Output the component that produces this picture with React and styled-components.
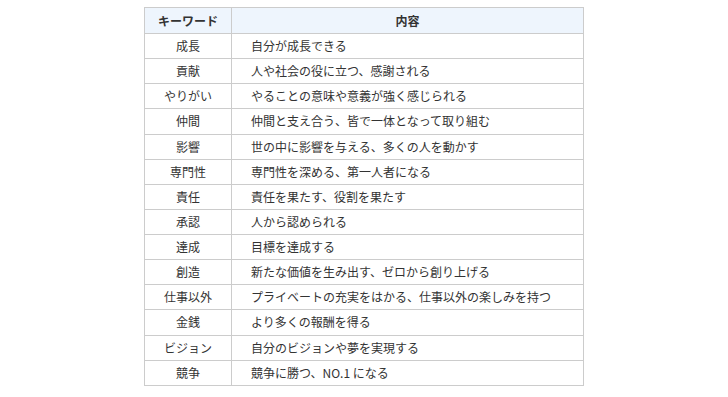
import React from "react";
import styled, { createGlobalStyle } from "styled-components";

const Global = createGlobalStyle`
  html, body { margin: 0; padding: 0; background: #ffffff; }
  body { font-family: "Noto Sans CJK JP", "Noto Sans", sans-serif; color: #333333; }
`;

const Page = styled.div`
  width: 728px;
  height: 397px;
  display: flex;
  justify-content: center;
  padding-top: 7px;
  box-sizing: border-box;
`;

const Table = styled.table`
  width: 440px;
  border-collapse: collapse;
  table-layout: fixed;
  font-size: 12px;
  line-height: 1;
  align-self: flex-start;
`;

const HeadCell = styled.th`
  background: #eef5fd;
  border: 1px solid #cccccc;
  height: 26px;
  padding: 0;
  font-weight: 700;
  text-align: center;
  color: #333333;
  box-sizing: border-box;
  width: ${(p) => p.$w || "auto"};
`;

const Cell = styled.td`
  border: 1px solid #cccccc;
  height: 25.14px;
  padding: 0 0 0 ${(p) => (p.$center ? "0" : "19px")};
  text-align: ${(p) => (p.$center ? "center" : "left")};
  color: #333333;
  box-sizing: border-box;
  white-space: nowrap;
`;

const rows = [
  ["成長", "自分が成長できる"],
  ["貢献", "人や社会の役に立つ、感謝される"],
  ["やりがい", "やることの意味や意義が強く感じられる"],
  ["仲間", "仲間と支え合う、皆で一体となって取り組む"],
  ["影響", "世の中に影響を与える、多くの人を動かす"],
  ["専門性", "専門性を深める、第一人者になる"],
  ["責任", "責任を果たす、役割を果たす"],
  ["承認", "人から認められる"],
  ["達成", "目標を達成する"],
  ["創造", "新たな価値を生み出す、ゼロから創り上げる"],
  ["仕事以外", "プライベートの充実をはかる、仕事以外の楽しみを持つ"],
  ["金銭", "より多くの報酬を得る"],
  ["ビジョン", "自分のビジョンや夢を実現する"],
  ["競争", "競争に勝つ、NO.1 になる"],
];

export default function App() {
  return (
    <>
      <Global />
      <Page>
        <Table>
          <thead>
            <tr>
              <HeadCell $w="87px">キーワード</HeadCell>
              <HeadCell>内容</HeadCell>
            </tr>
          </thead>
          <tbody>
            {rows.map(([k, v]) => (
              <tr key={k}>
                <Cell $center>{k}</Cell>
                <Cell>{v}</Cell>
              </tr>
            ))}
          </tbody>
        </Table>
      </Page>
    </>
  );
}
